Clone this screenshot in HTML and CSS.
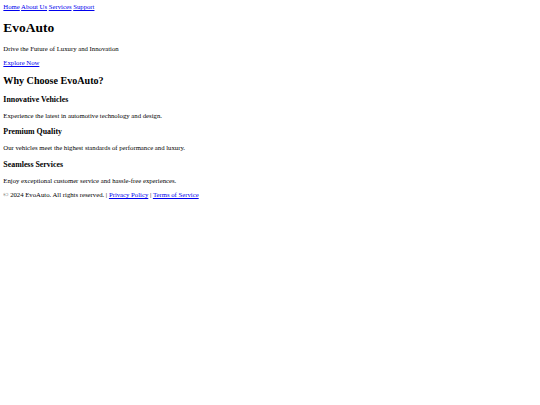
FILE: index.html
```html
<!DOCTYPE html>
<html lang="en">
<head>
<meta charset="utf-8">
<title>EvoAuto</title>
<link rel="stylesheet" href="styles.css">
</head>
<body class="page">
<nav class="nav">
<a href="#" class="link">Home</a>
<a href="#" class="link">About Us</a>
<a href="#" class="link">Services</a>
<a href="#" class="link">Support</a>
</nav>
<header class="hero">
<h1 class="title">EvoAuto</h1>
<p class="text">Drive the Future of Luxury and Innovation</p>
<p class="text"><a href="#" class="link">Explore Now</a></p>
</header>
<section class="features">
<h2 class="section-title">Why Choose EvoAuto?</h2>
<h3 class="feature-title">Innovative Vehicles</h3>
<p class="text">Experience the latest in automotive technology and design.</p>
<h3 class="feature-title">Premium Quality</h3>
<p class="text">Our vehicles meet the highest standards of performance and luxury.</p>
<h3 class="feature-title">Seamless Services</h3>
<p class="text">Enjoy exceptional customer service and hassle-free experiences.</p>
</section>
<footer class="footer">
<p class="text">© 2024 EvoAuto. All rights reserved. | <a href="#" class="link">Privacy Policy</a> | <a href="#" class="link">Terms of Service</a></p>
</footer>
</body>
</html>
```
FILE: styles.css
```css
.page {
  margin: 3.36px;
  font-family: "Liberation Serif", "Times New Roman", serif;
  font-size: 6.72px;
  line-height: 1.15;
  color: #000;
  background: #fff;
}
.link {
  color: #0000ee;
  text-decoration: underline;
}
.title {
  font-size: 2em;
  margin: 0.67em 0;
  font-weight: bold;
}
.section-title {
  font-size: 1.5em;
  margin: 0.83em 0;
  font-weight: bold;
}
.feature-title {
  font-size: 1.17em;
  margin: 1em 0;
  font-weight: bold;
}
.text {
  margin: 1em 0;
}
```
